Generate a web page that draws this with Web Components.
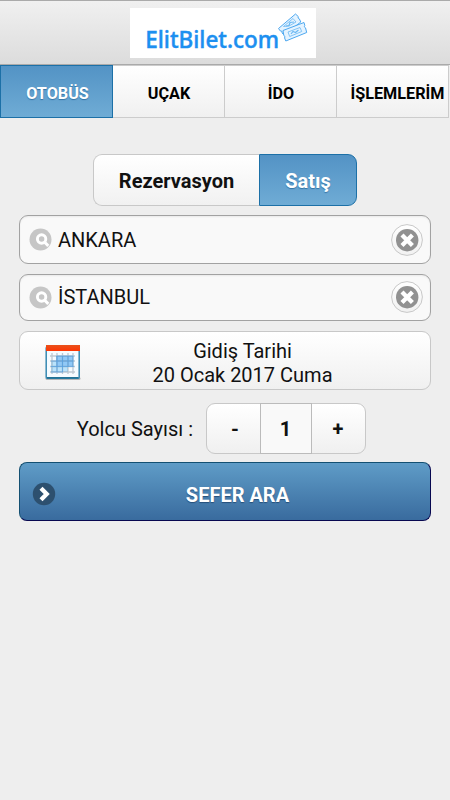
<!DOCTYPE html>
<html lang="tr"><head><meta charset="utf-8"><title>ElitBilet.com</title>
<style>body{margin:0;background:#eee;color:#111;font-family:Roboto,sans-serif}</style></head>
<body><ticket-app></ticket-app>
<script>
const define=(name,html)=>customElements.define(name,class extends HTMLElement{
  constructor(){super();this.attachShadow({mode:'open'}).innerHTML='<style>*{box-sizing:border-box}:host{box-sizing:border-box}</style>'+html;}
});
define('brand-header',`<style>
:host{display:flex;justify-content:center;height:65px;padding-top:7px;padding-right:4px;background:linear-gradient(#f0f0f0,#dcdcdc);border-top:1px solid #aaa;border-bottom:1px solid #aaa}
svg{display:block;background:#fff}
text{font-family:"Noto Sans","Open Sans",sans-serif;font-weight:500;font-size:24px;fill:#1c8ff0;stroke:#1c8ff0;stroke-width:.45}
</style><svg width="186" height="50" viewBox="0 0 186 50">
<text x="15.2" y="40.2" textLength="134" lengthAdjust="spacingAndGlyphs">ElitBilet.com</text>
<g fill="#e4f3ff" stroke="#4da8f0" stroke-width="1" stroke-linejoin="round">
<path d="M148.5 20.5 165.5 6l2.8 2.6q-1 1.7 1 2.2l1.5 3.2-16.7 13-2-2q.6-2.4-1.7-2z"/><path d="M153 22.5 174 14.5l.8 3q-1.5 1.4.7 2.3l1.2 4.7-20.9 8.5-1.2-3q1.1-1.8-.8-2.5z"/></g>
<g fill="none" stroke="#6ab8f3" stroke-width=".8"><path d="m153.5 18.5 9.5-8 3 3.5-7 4zM158 24l12-4.5 1.7 4-12 5z"/><path stroke-width="1.2" d="m156 18 3-.5 1-3 4-.5M161 26l2-2.5 2.5 1 3-2.5"/></g></svg>`);
define('nav-tab',`<style>
:host{display:flex;align-items:center;justify-content:center;padding:4px 0 0 1px;background:linear-gradient(#fff,#f0f0f0);border:1px solid #ccc;border-left:0;font-weight:700;font-size:16.2px;color:#000;white-space:nowrap}
:host([active]){padding-left:2px;background:linear-gradient(#5393c5,#6facd5);border:1px solid #1c70a7;color:#fff;text-shadow:0 1px 1px #3373a5}
</style><slot></slot>`);
define('nav-tabs',`<style>:host{display:grid;grid-template-columns:113px 112px 112px 112px;height:53px}nav-tab:last-child{padding-left:10px}</style>
<nav-tab active>OTOBÜS</nav-tab><nav-tab>UÇAK</nav-tab><nav-tab>İDO</nav-tab><nav-tab>İŞLEMLERİM</nav-tab>`);
define('mode-toggle',`<style>
:host{display:flex;width:264px;height:52px;font-size:20px;font-weight:700;color:#111}
span{display:flex;align-items:center;justify-content:center;padding-top:2px}
.a{width:166px;border:1px solid #c8c8c8;border-right:0;border-radius:9px 0 0 9px;background:linear-gradient(#fff,#f1f1f1)}
.b{flex:1;border:1px solid #1c70a7;border-radius:0 9px 9px 0;background:linear-gradient(#5393c5,#6facd5);color:#fff;text-shadow:0 1px 1px #3373a5}
</style><span class="a">Rezervasyon</span><span class="b">Satış</span>`);
define('city-field',`<style>
:host{display:flex;align-items:center;border:1px solid #a2a2a2;border-radius:9px;background:#f9f9f9;padding:0 7px 0 9px;font-size:20px;box-shadow:inset 0 1px 2px #0001}
.t{flex:1;padding-left:6px}:host(.two){padding-bottom:1px}svg{display:block;flex:none}
</style><svg width="23" height="23"><circle cx="11.5" cy="11.5" r="11" fill="#c6c6c6"/><circle cx="12.6" cy="11" r="4.2" fill="none" stroke="#fff" stroke-width="2.9"/><path d="m15.4 14 3.9 3.9" stroke="#fff" stroke-width="3"/></svg>
<span class="t"><slot></slot></span>
<svg width="32" height="32"><defs><linearGradient id="g" x2="0" y2="1"><stop stop-color="#fff"/><stop offset="1" stop-color="#f1f1f1"/></linearGradient></defs><circle cx="16" cy="16" r="15.4" fill="url(#g)" stroke="#c8c8c8"/><circle cx="16.2" cy="16.2" r="11.2" fill="#919191"/><path d="m11 11 10.4 10.4m0-10.4-10.4 10.4" stroke="#fff" stroke-width="4.3"/></svg>`);
define('date-picker',`<style>
:host{display:flex;align-items:center;border:1px solid #c8c8c8;border-radius:9px;background:linear-gradient(#fff,#f0f0f0);font-size:20px;line-height:24px;padding-left:25px}
div{flex:1;text-align:center;padding-right:26px;padding-top:4px}svg{display:block;margin-top:3px}
</style><svg width="36" height="37"><defs><linearGradient id="r" x2="0" y2="1"><stop stop-color="#e8521c"/><stop offset="1" stop-color="#ff3503"/></linearGradient></defs>
<rect x=".5" y="33" width="35" height="3" rx="1.5" fill="#b6b6b6"/><rect x="1.2" y="3" width="33" height="31.2" rx="1" fill="#f5fbff" stroke="#3689b2" stroke-width="1.5"/><path d="M2 33.8h31.5" stroke="#16688d" stroke-width="1.4"/><path fill="url(#r)" d="M1 1h34v6H1z"/>
<path fill="#b9e3fc" d="M11 12h17v10h-5v6H6V17h5z"/><path fill="#8fc9f8" d="M11 12h17v10H11z"/><path d="M5 12h25M5 17h25M5 22.5h25M5 28h25M7 9v21M12 9v21M17.5 9v21M23 9v21M28 9v21" stroke="#8798a5" stroke-opacity=".5" stroke-width="1.3"/><path d="M11.5 12h17M6 17h22.5M6 22.5h22.5M6 28h12M12 12v16M17.5 12v16M23 12v11M28 12v11" stroke="#4b9ee5" stroke-opacity=".65"/></svg><div>Gidiş Tarihi<br>20 Ocak 2017 Cuma</div>`);
define('passenger-count',`<style>
:host{display:flex;align-items:center;justify-content:flex-end;font-size:20px}
label{padding-right:13px}
div{display:grid;grid-template-columns:53px 52px 53px;width:160px;height:51px;border:1px solid #c8c8c8;border-radius:9px;background:linear-gradient(#fff,#f0f0f0);font-weight:700}
span{display:flex;align-items:center;justify-content:center;padding-top:1px}
.n{margin:-1px 0;padding-right:1px;border:1px solid #bbb;background:#f9f9f9}span:last-child{padding-right:1px}span:first-child{padding-left:3px}
</style><label>Yolcu Sayısı :</label><div><span>-</span><span class="n">1</span><span>+</span></div>`);
define('search-button',`<style>
:host{display:flex;align-items:center;border:1px solid;border-color:#145072 #080850 #080850 #145072;border-radius:8px;background:linear-gradient(#5f9cc7,#396b9e);padding-left:12px;color:#fff;font-size:20px;font-weight:700;text-shadow:0 1px 1px #254f7a}
span{flex:1;text-align:center;padding:6px 11px 0 0}svg{display:block;margin-top:4px}
</style><svg width="24" height="24"><circle cx="12" cy="12" r="11.2" fill="#2d506f"/><path d="m9 6.3 5.7 5.7L9 17.7" fill="none" stroke="#fff" stroke-width="4.3"/></svg><span><slot></slot></span>`);
define('ticket-app',`<style>
:host{display:block;width:450px;height:800px;overflow:hidden;background:#eee}
main{display:flex;flex-direction:column;padding:36px 19px 0}
mode-toggle{margin-left:74px;margin-bottom:9px}
city-field{height:49px;margin-bottom:10px}.two{height:47px}
date-picker{height:59px;margin-bottom:13px}
passenger-count{height:51px;margin-bottom:8px;margin-right:65px}
search-button{height:59px}
</style><brand-header></brand-header><nav-tabs></nav-tabs><main><mode-toggle></mode-toggle>
<city-field>ANKARA</city-field><city-field class="two">İSTANBUL</city-field><date-picker></date-picker><passenger-count></passenger-count><search-button>SEFER ARA</search-button></main>`);
</script></body></html>
